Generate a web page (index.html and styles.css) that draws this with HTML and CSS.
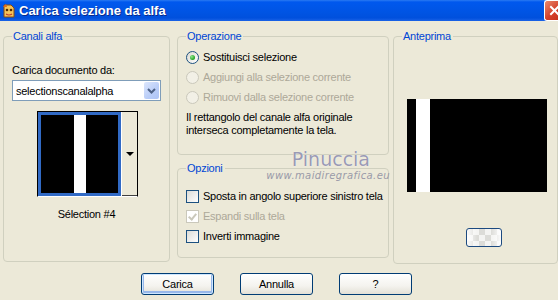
FILE: index.html
```html
<!DOCTYPE html>
<html>
<head>
    <title>Carica selezione da alfa</title>
    <link rel="stylesheet" href="styles.css">
</head>
<body>
    <div class="window">
        <div class="titlebar">
            <svg class="app-icon" width="14" height="14" viewBox="0 0 14 14">
                <path d="M2 1 L9 1 L12 4 L12 13 L2 13 Z" fill="#f3c35a" stroke="#8a4b10" stroke-width="1"/>
                <circle cx="5" cy="6" r="1.3" fill="#5a2a00"/>
                <circle cx="9" cy="6" r="1.3" fill="#5a2a00"/>
                <path d="M4 10 Q7 12 10 10" fill="none" stroke="#c0392b" stroke-width="1.2"/>
                <path d="M1 3 L4 0 L5 3 Z" fill="#e36b1c"/>
            </svg>
            <span class="title">Carica selezione da alfa</span>
            <span class="close">
                <svg width="13" height="13" viewBox="0 0 13 13">
                    <path d="M3 3 L10 10 M10 3 L3 10" stroke="#fff" stroke-width="2" stroke-linecap="square"/>
                </svg>
            </span>
        </div>

        <div class="client">
            <div class="groups">
                <fieldset class="group canali">
                    <legend>Canali alfa</legend>
                    <div class="label">Carica documento da:</div>
                    <div class="combo">
                        <span class="combo-text">selectionscanalalpha</span>
                        <span class="combo-btn">
                            <svg width="9" height="6" viewBox="0 0 9 6">
                                <path d="M1 1 L4.5 4.5 L8 1" fill="none" stroke="#4d6185" stroke-width="2"/>
                            </svg>
                        </span>
                    </div>
                    <div class="thumb">
                        <div class="thumb-img"></div>
                        <div class="thumb-drop"><span class="tri"></span></div>
                    </div>
                    <div class="caption">Sélection #4</div>
                </fieldset>

                <div class="middle">
                    <fieldset class="group operazione">
                        <legend>Operazione</legend>
                        <div class="row"><span class="radio checked"></span>Sostituisci selezione</div>
                        <div class="row disabled"><span class="radio"></span>Aggiungi alla selezione corrente</div>
                        <div class="row disabled"><span class="radio"></span>Rimuovi dalla selezione corrente</div>
                        <p class="note">Il rettangolo del canale alfa originale interseca completamente la tela.</p>
                    </fieldset>
                    <fieldset class="group opzioni">
                        <legend>Opzioni</legend>
                        <div class="row"><span class="check"></span>Sposta in angolo superiore sinistro tela</div>
                        <div class="row disabled"><span class="check checked"></span>Espandi sulla tela</div>
                        <div class="row"><span class="check"></span>Inverti immagine</div>
                    </fieldset>
                    <div class="watermark">
                        <span class="wm-name">Pinuccia</span>
                        <span class="wm-url">www.maidiregrafica.eu</span>
                    </div>
                </div>

                <fieldset class="group anteprima">
                    <legend>Anteprima</legend>
                    <div class="preview"></div>
                    <div class="bg-btn"></div>
                </fieldset>
            </div>

            <div class="buttons">
                <button class="btn default">Carica</button>
                <button class="btn">Annulla</button>
                <button class="btn">?</button>
            </div>
        </div>
    </div>
</body>
</html>
```

FILE: styles.css
```css
body {
    margin: 0;
    background: #ece9d8;
    font-family: "Liberation Sans", Arial, sans-serif;
    font-size: 11px;
    letter-spacing: -0.25px;
    color: #000;
}
.window {
    width: 558px;
    height: 300px;
    overflow: hidden;
    background: #ece9d8;
}
.titlebar {
    height: 21px;
    display: flex;
    align-items: center;
    background: linear-gradient(#2a7af2 0, #0058ee 2px, #0054e3 60%, #0050dd 85%, #1a62e6 100%);
}
.app-icon {
    margin-left: 2px;
    margin-right: 3px;
}
.title {
    font-family: "Liberation Sans", Arial, sans-serif;
    font-weight: bold;
    font-size: 13px;
    letter-spacing: 0;
    color: #fff;
    text-shadow: 1px 1px #0a2a8a;
}
.close {
    margin-left: auto;
    width: 13px;
    height: 19px;
    display: flex;
    align-items: center;
    justify-content: flex-end;
    background: linear-gradient(135deg, #e88b6e, #d5412a 60%, #c8321c);
    border: 1px solid #fff;
    border-right: none;
    border-radius: 3px 0 0 3px;
    overflow: hidden;
}
.close svg {
    margin-right: -3px;
}
.client {
    padding-top: 9px;
}
.groups {
    display: flex;
    height: 233px;
    padding-left: 3px;
}
.group {
    margin: 0;
    border: 1px solid #d0d0bf;
    border-radius: 4px;
    padding: 0 8px;
    box-sizing: border-box;
    min-width: 0;
}
.group legend {
    color: #0046d5;
    padding: 0 2px 0 1px;
    margin-left: 0;
    line-height: 13px;
}
.canali {
    width: 167px;
    height: 232px;
}
.middle {
    position: relative;
    width: 212px;
    margin-left: 7px;
    display: flex;
    flex-direction: column;
    gap: 7px;
}
.operazione {
    height: 125px;
}
.opzioni {
    height: 96px;
}
.anteprima {
    width: 165px;
    height: 234px;
    margin-left: 4px;
}

/* canali alfa */
.label {
    margin-top: 21px;
    line-height: 13px;
}
.combo {
    margin-top: 3px;
    height: 21px;
    box-sizing: border-box;
    border: 1px solid #7f9db9;
    background: #fff;
    display: flex;
    align-items: center;
    width: 149px;
}
.combo-text {
    padding-left: 3px;
    flex: 1;
}
.combo-btn {
    width: 15px;
    height: 17px;
    margin-right: 1px;
    border-radius: 2px;
    background: linear-gradient(135deg, #dce6fc, #b9cdf8 60%, #aec4f5);
    display: flex;
    align-items: center;
    justify-content: center;
}
.thumb {
    margin-top: 10px;
    margin-left: 25px;
    width: 101px;
    height: 86px;
    box-sizing: border-box;
    display: flex;
    border: 1px solid #000;
    border-bottom-color: #fff;
    background: #fff;
}
.thumb-img {
    width: 83px;
    height: 84px;
    box-sizing: border-box;
    border: 3px solid #316ac5;
    background: linear-gradient(to right, #000 33px, #fff 33px, #fff 45px, #000 45px);
}
.thumb-drop {
    flex: 1;
    margin-left: 1px;
    background: #ece9d8;
    border-bottom: 1px solid #404040;
    display: flex;
    align-items: center;
    justify-content: center;
}
.tri {
    width: 0;
    height: 0;
    border-left: 4px solid transparent;
    border-right: 4px solid transparent;
    border-top: 4px solid #000;
}
.caption {
    margin-top: 11px;
    text-align: center;
    line-height: 13px;
}

/* operazione / opzioni */
.row {
    height: 20px;
    display: flex;
    align-items: center;
    gap: 4px;
    white-space: nowrap;
}
.row.disabled {
    color: #aca899;
}
.operazione .row:first-of-type {
    margin-top: 4px;
}
.opzioni .row:first-of-type {
    margin-top: 11px;
}
.radio {
    flex: none;
    width: 13px;
    height: 13px;
    box-sizing: border-box;
    border-radius: 50%;
    border: 1px solid #1c5180;
    background: linear-gradient(135deg, #dcd9d0, #fff);
    display: flex;
    align-items: center;
    justify-content: center;
}
.radio.checked::after {
    content: "";
    width: 5px;
    height: 5px;
    border-radius: 50%;
    background: radial-gradient(circle at 35% 35%, #8ee68b, #21a121 70%);
}
.disabled .radio {
    border-color: #cac8bb;
    background: #f2f0e6;
}
.note {
    margin: 4px 0 0;
    line-height: 13px;
}
.check {
    flex: none;
    width: 13px;
    height: 13px;
    box-sizing: border-box;
    border: 1px solid #1c5180;
    background: linear-gradient(135deg, #dcdcd7, #fff);
    position: relative;
}
.disabled .check {
    border-color: #cac8bb;
    background: #fff;
}
.check.checked::after {
    content: "";
    position: absolute;
    left: 3px;
    top: 1px;
    width: 3px;
    height: 6px;
    border-right: 2px solid #cac8bb;
    border-bottom: 2px solid #cac8bb;
    transform: rotate(40deg);
}

.watermark {
    position: absolute;
    left: 89px;
    top: 119px;
    width: 124px;
    display: flex;
    flex-direction: column;
    align-items: flex-end;
    pointer-events: none;
}
.wm-name {
    font-family: "DejaVu Sans", sans-serif;
    font-size: 19px;
    letter-spacing: 0;
    color: #9a9ab4;
    line-height: 21px;
    margin-right: 20px;
    text-shadow: 0 0 1px #fff;
}
.wm-url {
    font-family: "DejaVu Sans", sans-serif;
    font-style: italic;
    font-size: 10px;
    letter-spacing: 0.4px;
    color: #9a9aa8;
    line-height: 12px;
}

/* anteprima */
.preview {
    margin-top: 56px;
    margin-left: 5px;
    width: 140px;
    height: 93px;
    background: linear-gradient(to right, #000 9px, #fff 9px, #fff 23px, #000 23px);
}
.bg-btn {
    margin-top: 36px;
    margin-left: 64px;
    width: 36px;
    height: 19px;
    box-sizing: border-box;
    border: 1px solid #1c4a80;
    border-radius: 3px;
    background:
        linear-gradient(to right, rgba(255,255,255,0.9), rgba(255,255,255,0) 30%, rgba(255,255,255,0) 70%, rgba(255,255,255,0.9)),
        repeating-conic-gradient(#f4f4f2 0 25%, #dcdcd8 0 50%) 0 0 / 12px 12px;
}

/* buttons */
.buttons {
    margin-top: 10px;
    display: flex;
    gap: 26px;
    padding-left: 141px;
}
.btn {
    width: 73px;
    height: 22px;
    padding: 0;
    border: 1px solid #003c74;
    border-radius: 3px;
    background: linear-gradient(#fff, #f4f3ee 60%, #e3e0d6);
    font-family: "Liberation Sans", Arial, sans-serif;
    font-size: 11px;
    letter-spacing: -0.25px;
    color: #000;
}
.btn.default {
    box-shadow: inset 0 0 0 1px #cee7ff, inset 0 -1px 0 2px #98b8ea;
}
```
